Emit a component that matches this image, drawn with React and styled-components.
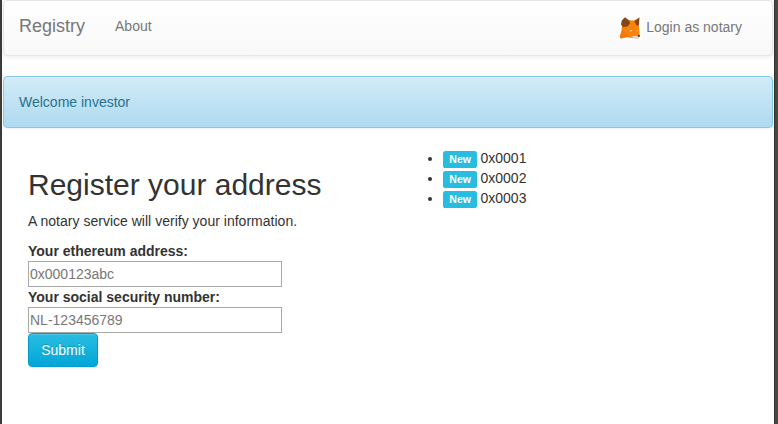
import React from "react";
import styled, { createGlobalStyle } from "styled-components";

const GlobalStyle = createGlobalStyle`
  *, *::before, *::after { box-sizing: border-box; }
  body {
    margin: 0;
    font-family: "Liberation Sans", Arial, sans-serif;
    font-size: 14px;
    line-height: 20px;
    color: #333;
    background: #fff;
    overflow: hidden;
  }
`;

const Frame = styled.div`
  display: grid;
  grid-template-columns: 2px 1fr 4px;
  height: 424px;
`;

const LeftEdge = styled.div`
  background: #3c3b37;
`;

const RightEdge = styled.div`
  background: linear-gradient(to right, #33352e 0 1px, #45473f 1px 3px, #4b4d45 3px);
`;

const Page = styled.div`
  padding: 0 1px;
  min-width: 0;
`;

const Navbar = styled.nav`
  display: flex;
  align-items: flex-start;
  height: 56px;
  padding: 0 15px;
  border: 1px solid #e4e4e4;
  border-radius: 4px;
  background: linear-gradient(to bottom, #fff 0%, #f8f8f8 100%);
  box-shadow: inset 0 1px 0 rgba(255, 255, 255, 0.15), 0 1px 5px rgba(0, 0, 0, 0.075);
  color: #777;
  text-shadow: 0 1px 0 rgba(255, 255, 255, 0.25);
`;

const Brand = styled.a`
  padding: 15px 15px 15px 0;
  font-size: 18px;
`;

const NavLink = styled.a`
  padding: 15px;
`;

const LoginLink = styled(NavLink)`
  display: flex;
  align-items: flex-start;
  gap: 4px;
  margin-left: auto;
  padding: 15px 15px 0;
`;

const LoginText = styled.span`
  padding-top: 1px;
`;

const FoxIcon = styled.svg`
  display: block;
  width: 24px;
  height: 24px;
  background: #fff;
`;

const Alert = styled.div`
  height: 52px;
  margin: 20px 0;
  padding: 15px;
  border: 1px solid #85c9e8;
  border-radius: 4px;
  background: linear-gradient(to bottom, #d2ebf7 0%, #aedaf0 100%);
  box-shadow: inset 0 1px 0 rgba(255, 255, 255, 0.25), 0 1px 2px rgba(0, 0, 0, 0.05);
  color: #25708f;
  text-shadow: 0 1px 0 rgba(255, 255, 255, 0.2);
`;

const Columns = styled.main`
  display: grid;
  grid-template-columns: 1fr 1fr;
  width: 750px;
  margin: 0 auto;
`;

const Column = styled.section`
  padding: 0 15px;
`;

const Title = styled.h2`
  margin: 20px 0 10px;
  font-size: 30px;
  font-weight: 500;
  line-height: 33px;
`;

const Intro = styled.p`
  margin: 0 0 10px;
  letter-spacing: 0.015px;
`;

const Form = styled.form`
  display: flex;
  flex-direction: column;
  align-items: flex-start;
`;

const Label = styled.label`
  font-weight: 700;
`;

const Input = styled.input`
  width: 254px;
  height: 26px;
  padding: 1px;
  border: 1px solid #a9a9a9;
  border-radius: 0;
  background: #fff;
  font: inherit;
  color: #333;
  &::placeholder { color: #777; opacity: 1; }
`;

const SubmitButton = styled.button`
  width: 70px;
  height: 34px;
  padding: 6px 12px;
  border: 1px solid #029acf;
  border-radius: 4px;
  background: linear-gradient(to bottom, #29bde1 0%, #02a6d8 100%);
  box-shadow: inset 0 1px 0 rgba(255, 255, 255, 0.15), 0 1px 1px rgba(0, 0, 0, 0.075);
  color: #fff;
  font: inherit;
  text-shadow: 0 -1px 0 rgba(0, 0, 0, 0.2);
`;

const AddressList = styled.ul`
  margin: 0 0 10px;
  padding-left: 40px;
`;

const Badge = styled.span`
  display: inline;
  margin-right: -0.6px;
  padding: 2.1px 6.3px 3.15px;
  border-radius: 2.6px;
  background: #27bce0;
  color: #fff;
  font-size: 10.5px;
  font-weight: 700;
  line-height: 1;
  vertical-align: baseline;
`;

function Fox() {
  return (
    <FoxIcon viewBox="0 0 24 24" aria-hidden="true">
      <path d="M4 9 10 4.2 15.8 4.6 20.5 2.5 20.8 8.5 21.3 12.5 21.6 19.5 20.7 22 15.5 22 8 21.2 2.8 22.4 1.8 20.8 3.6 15.4Z" fill="#f7830d" />
      <path d="M4 13 8 17.5 12.5 18 8 21.2 2.8 22.4 1.8 20.8Z" fill="#f5780b" />
      <path d="M7 1.3 11.2 4.4 12 7.6 9.4 10.6 4.8 11 3 8.4 3.8 4.6Z" fill="#814719" />
      <path d="M21.5 1.3 20.9 9 19 9.8 16.2 5.6Z" fill="#884616" />
      <path d="M13.2 20.2 18.6 19.8 21.3 21 20.3 22.9 16.4 22.6Z" fill="#e4d0c2" />
      <path d="M11.8 14.2 13.8 14 13.8 15.6 12.4 15.6ZM18.6 14.2 20 13.8 19.5 15.2Z" fill="#f8ddb4" />
      <path d="M12.6 14.9H13.3V15.6H12.6Z" fill="#8a7a62" />
      <path d="M19.8 18.9 21.7 18.9 21.6 21 20.3 20.8Z" fill="#302b29" />
    </FoxIcon>
  );
}

const addresses = ["0x0001", "0x0002", "0x0003"];

export default function App() {
  return (
    <>
      <GlobalStyle />
      <Frame>
        <LeftEdge />
        <Page>
          <Navbar>
            <Brand>Registry</Brand>
            <NavLink>About</NavLink>
            <LoginLink>
              <Fox />
              <LoginText>Login as notary</LoginText>
            </LoginLink>
          </Navbar>
          <Alert>Welcome investor</Alert>
          <Columns>
            <Column>
              <Title>Register your address</Title>
              <Intro>A notary service will verify your information.</Intro>
              <Form>
                <Label htmlFor="address">Your ethereum address:</Label>
                <Input id="address" placeholder="0x000123abc" />
                <Label htmlFor="ssn">Your social security number:</Label>
                <Input id="ssn" placeholder="NL-123456789" />
                <SubmitButton type="button">Submit</SubmitButton>
              </Form>
            </Column>
            <Column>
              <AddressList>
                {addresses.map((address) => (
                  <li key={address}>
                    <Badge>New</Badge> {address}
                  </li>
                ))}
              </AddressList>
            </Column>
          </Columns>
        </Page>
        <RightEdge />
      </Frame>
    </>
  );
}
